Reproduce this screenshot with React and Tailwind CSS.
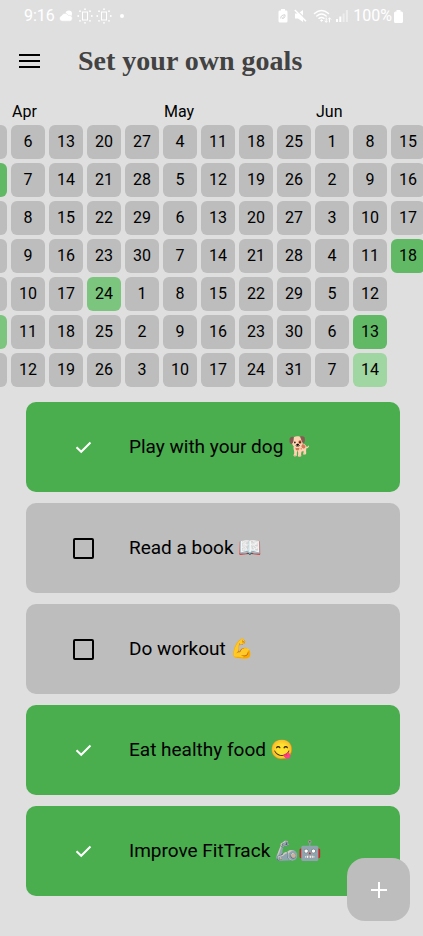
import { useState } from "react";

const NONE = "bg-[#bdbdbd]";
const LIGHT = "bg-[#a0d6a2]";
const MEDIUM = "bg-[#7cc57f]";
const STRONG = "bg-[#61b965]";

const weeks = [
  [null, null, null, null, null, null, null],
  [6, 7, 8, 9, 10, 11, 12],
  [13, 14, 15, 16, 17, 18, 19],
  [20, 21, 22, 23, 24, 25, 26],
  [27, 28, 29, 30, 1, 2, 3],
  [4, 5, 6, 7, 8, 9, 10],
  [11, 12, 13, 14, 15, 16, 17],
  [18, 19, 20, 21, 22, 23, 24],
  [25, 26, 27, 28, 29, 30, 31],
  [1, 2, 3, 4, 5, 6, 7],
  [8, 9, 10, 11, 12, 13, 14],
  [15, 16, 17, 18],
];

const levels = {
  "0-1": STRONG,
  "0-5": MEDIUM,
  "3-4": MEDIUM,
  "10-5": STRONG,
  "10-6": LIGHT,
  "11-3": STRONG,
};

const initialGoals = [
  { id: "dog", text: "Play with your dog", emoji: "🐕", done: true },
  { id: "book", text: "Read a book", emoji: "📖", done: false },
  { id: "workout", text: "Do workout", emoji: "💪", done: false },
  { id: "food", text: "Eat healthy food", emoji: "😋", done: true },
  { id: "fittrack", text: "Improve FitTrack", emoji: "🦾🤖", done: true },
];

function SunIcon() {
  return (
    <svg width="16" height="16" viewBox="0 0 16 16" fill="none" stroke="white" aria-hidden="true">
      <rect x="5.5" y="4" width="5" height="8" strokeWidth="1" />
      <g fill="white" stroke="none">
        <circle cx="8" cy="1.2" r="0.9" />
        <circle cx="8" cy="14.8" r="0.9" />
        <circle cx="1.2" cy="8" r="0.9" />
        <circle cx="14.8" cy="8" r="0.9" />
        <circle cx="3" cy="3.2" r="0.9" />
        <circle cx="13" cy="3.2" r="0.9" />
        <circle cx="3" cy="12.8" r="0.9" />
        <circle cx="13" cy="12.8" r="0.9" />
      </g>
    </svg>
  );
}

function StatusBar() {
  return (
    <div className="flex h-8 items-center justify-between pl-6 pr-5 text-base text-white">
      <div className="flex items-center">
        <span>9:16</span>
        <svg className="ml-1" width="14" height="12" viewBox="0 0 14 12" fill="white" aria-hidden="true">
          <circle cx="9.8" cy="3.8" r="3.2" />
          <path d="M3 11.2a2.9 2.9 0 0 1-.3-5.7A3.6 3.6 0 0 1 9.4 5.6 2.9 2.9 0 1 1 10.5 11.2Z" stroke="#dfdfdf" strokeWidth=".6" />
        </svg>
        <span className="ml-1 flex gap-[3px]">
          <SunIcon />
          <SunIcon />
        </span>
        <span className="ml-2 size-1 rounded-full bg-white" />
      </div>
      <div className="flex items-center">
        <svg width="10" height="14" viewBox="0 0 10 14" aria-hidden="true">
          <path fill="white" d="M3 0h4v1.6h1.2Q9.5 1.6 9.5 3v9q0 1.5-1.3 1.5H1.8Q.5 13.5.5 12V3Q.5 1.6 1.8 1.6H3Z" />
          <path d="M2.8 9.5Q2.5 6 7 5.8 7.2 9.8 4.2 9.3L6 7.5" fill="none" stroke="#cfcfcf" strokeWidth=".9" />
        </svg>
        <svg className="ml-1.5" width="13" height="14" viewBox="0 0 13 14" aria-hidden="true">
          <path fill="white" d="M1 4.5h3L9 1v12L4 9.500H1Z" />
          <path d="M1.500 0 13 11.500" stroke="#dfdfdf" strokeWidth="1.300" />
          <path d="M.8 1 12 12.200" stroke="white" strokeWidth="1.500" />
        </svg>
        <svg className="ml-1.5" width="19" height="14" viewBox="0 0 19 14" fill="none" stroke="white" strokeLinecap="round" aria-hidden="true">
          <path d="M1.500 4.500Q8.500-1.500 15.500 4.500M3.800 7Q8.500 3 13.200 7M6 9.300Q8.500 7.500 11 9.300" strokeWidth="1.500" />
          <circle cx="8.500" cy="11.500" r=".8" fill="white" />
          <path d="M13.200 9v4M11.900 12l1.300 1.300 1.300-1.300M16.500 13V9M15.200 10.200l1.300-1.300 1.300 1.300" strokeWidth="1" />
        </svg>
        <svg className="ml-1" width="13" height="12" viewBox="0 0 13 12" fill="white" aria-hidden="true">
          <rect x="0" y="9" width="2" height="3" />
          <rect x="3.300" y="6.500" width="2" height="5.500" />
          <rect x="6.600" y="3.500" width="2" height="8.500" opacity=".45" />
          <rect x="9.900" y="0" width="2" height="12" opacity=".45" />
        </svg>
        <span className="ml-1">100%</span>
        <svg className="ml-0.5" width="9" height="13" viewBox="0 0 9 13" fill="white" aria-hidden="true">
          <path d="M2.500 0h4v1.500h1Q9 1.500 9 3v8.500Q9 13 7.500 13h-6Q0 13 0 11.500V3q0-1.500 1.500-1.500h1Z" />
        </svg>
      </div>
    </div>
  );
}

function Calendar() {
  return (
    <section aria-label="Activity" className="mt-2.5 overflow-hidden">
      <div className="flex pl-3 text-base leading-6">
        <span className="w-[152px] shrink-0">Apr</span>
        <span className="w-[152px] shrink-0">May</span>
        <span>Jun</span>
      </div>
      <div className="-ml-[27px] mt-px flex gap-1">
        {weeks.map((days, w) => (
          <div key={w} className="flex shrink-0 flex-col gap-1">
            {days.map((day, d) => (
              <div
                key={d}
                className={`flex size-[34px] items-center justify-center rounded-md text-base ${levels[`${w}-${d}`] || NONE}`}
              >
                {day}
              </div>
            ))}
          </div>
        ))}
      </div>
    </section>
  );
}

function Goal({ goal, onToggle }) {
  return (
    <li>
      <label
        htmlFor={goal.id}
        className={`flex h-[90px] items-center rounded-[10px] pl-[47px] ${goal.done ? "bg-[#4aad4e]" : "bg-[#bdbdbd]"}`}
      >
        <span className="grid size-[21px] shrink-0 place-items-center">
          <input
            id={goal.id}
            type="checkbox"
            checked={goal.done}
            onChange={() => onToggle(goal.id)}
            className="col-start-1 row-start-1 size-[21px] appearance-none rounded-xs border-2 border-black checked:border-transparent"
          />
          {goal.done && (
            <svg className="pointer-events-none col-start-1 row-start-1" width="17" height="13" viewBox="0 0 17 13" fill="none" stroke="white" strokeWidth="2" aria-hidden="true">
              <path d="M1.500 6.200 6.200 10.800 15.500 1.500" />
            </svg>
          )}
        </span>
        <span className="ml-[35px] text-[19px] leading-7">
          {goal.text} {goal.emoji}
        </span>
      </label>
    </li>
  );
}

export default function App() {
  const [goals, setGoals] = useState(initialGoals);
  const toggle = (id) => setGoals(goals.map((g) => (g.id === id ? { ...g, done: !g.done } : g)));

  return (
    <div className="min-h-screen bg-[#dfdfdf] font-[Roboto,'Noto_Color_Emoji',sans-serif] text-black">
      <StatusBar />
      <header className="flex h-[58px] items-center pl-[19px]">
        <button type="button" aria-label="Open menu" className="flex w-[21px] flex-col gap-1">
          <span className="h-0.5 bg-black" />
          <span className="h-0.5 bg-black" />
          <span className="h-0.5 bg-black" />
        </button>
        <h1 className="ml-[38px] font-['Liberation_Serif',serif] text-[28px] font-bold text-[#424242]">
          Set your own goals
        </h1>
      </header>
      <Calendar />
      <ul className="ml-[26px] mr-[23px] mt-[15px] flex flex-col gap-[11px] pb-10">
        {goals.map((goal) => (
          <Goal key={goal.id} goal={goal} onToggle={toggle} />
        ))}
      </ul>
      <button
        type="button"
        aria-label="Add goal"
        className="fixed bottom-[15px] right-[13px] grid size-[63px] place-items-center rounded-[18px] bg-[#bdbdbd]"
      >
        <svg width="16" height="16" viewBox="0 0 16 16" stroke="white" strokeWidth="2" aria-hidden="true">
          <path d="M8 0v16M0 8h16" />
        </svg>
      </button>
    </div>
  );
}
